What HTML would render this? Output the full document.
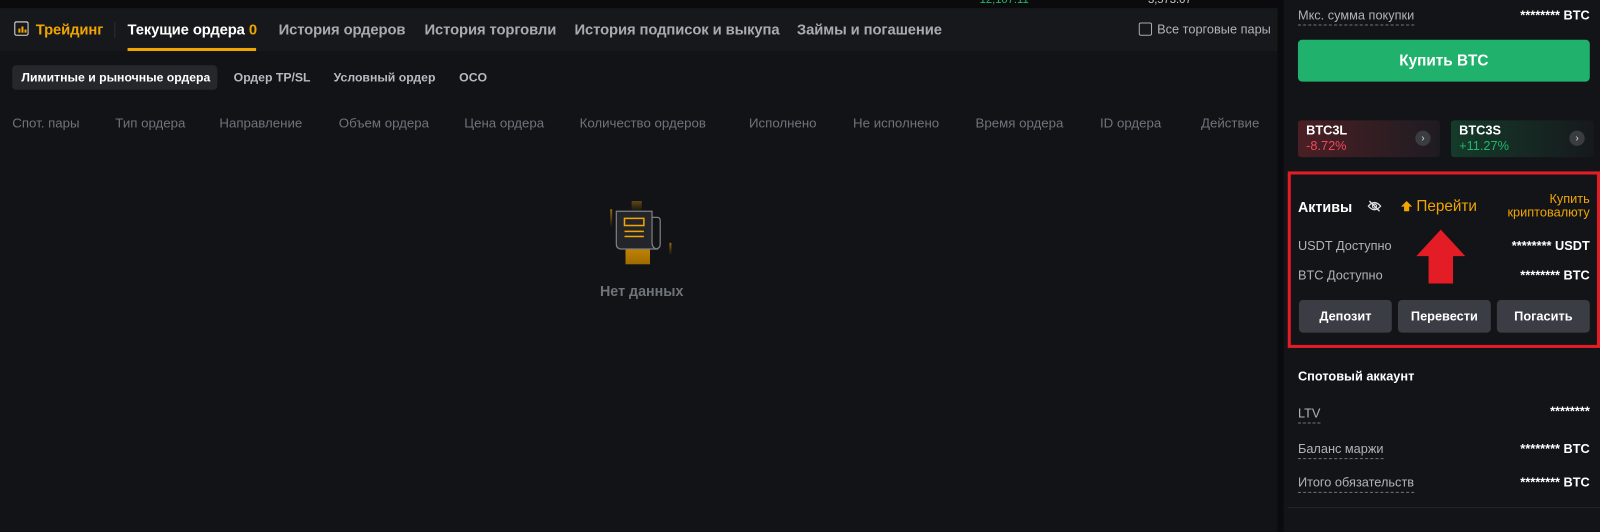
<!DOCTYPE html>
<html><head><meta charset="utf-8"><style>
*{margin:0;padding:0;box-sizing:border-box}
html,body{width:1600px;height:521px;overflow:hidden;background:#0b0b0e}
body{font-family:"Liberation Sans","DejaVu Sans",sans-serif;color:#eaecef}
#wrap{position:absolute;left:0;top:0;width:1568px;height:511px;transform:scale(1.0204);transform-origin:0 0}
.abs{position:absolute;white-space:nowrap}
#left{position:absolute;left:0;top:8px;width:1252px;height:513px;background:#121317}
#tabbar{position:absolute;left:0;top:0;width:1252px;height:42px;background:#17181c}
.tab{position:absolute;top:14px;font-size:14.5px;font-weight:bold;color:#a8abb2;letter-spacing:-0.1px}
.sub{position:absolute;top:61px;font-size:12px;font-weight:bold;color:#b7bac1}
.th{position:absolute;top:105px;font-size:13px;color:#6f737a}
#right{position:absolute;left:1258px;top:0;width:344px;height:521px;background:#131418}
.lbl{font-size:12.5px;color:#b0b3ba}
.val{font-size:12.5px;color:#fff;font-weight:bold;right:44px}
.btn{position:absolute;top:294px;width:91px;height:32px;background:#3a3d43;border-radius:4px;color:#fff;font-weight:bold;font-size:12.5px;text-align:center;line-height:32px}
.dash{border-bottom:1px dashed #6f737a;padding-bottom:2px}
</style></head><body><div id="wrap">
<div class="abs" style="left:960px;top:-6px;font-size:11px;color:#1fb76a">12,107.11</div>
<div class="abs" style="left:1125px;top:-6px;font-size:11px;color:#ccc">3,573.07</div>
<div id="left">
 <div id="tabbar">
  <div class="abs" style="left:14px;top:13px;width:14px;height:14px;border:1.5px solid #ddd;border-radius:2px"></div>
  <div class="abs" style="left:18px;top:20px;width:2px;height:4px;background:#f0a500"></div>
  <div class="abs" style="left:21px;top:18px;width:2px;height:6px;background:#f0a500"></div>
  <div class="abs" style="left:24px;top:21px;width:2px;height:3px;background:#f0a500"></div>
  <div class="tab" style="left:35px;color:#f0a500">Трейдинг</div>
  <div class="abs" style="left:112px;top:13px;width:1px;height:16px;background:#2a2c31"></div>
  <div class="tab" style="left:125px;color:#fff">Текущие ордера <span style="color:#f0a500">0</span></div>
  <div class="abs" style="left:125px;top:39px;width:126px;height:3px;background:#f0a500"></div>
  <div class="tab" style="left:273px">История ордеров</div>
  <div class="tab" style="left:416px">История торговли</div>
  <div class="tab" style="left:563px">История подписок и выкупа</div>
  <div class="tab" style="left:781px">Займы и погашение</div>
  <div class="abs" style="left:1116px;top:14px;width:13px;height:13px;border:1.5px solid #aaa;border-radius:2px"></div>
  <div class="abs" style="left:1134px;top:14px;font-size:12.5px;color:#b0b3ba">Все торговые пары</div>
 </div>
 <div class="abs" style="left:12px;top:56px;width:201px;height:24px;background:#25272c;border-radius:4px"></div>
 <div class="sub" style="left:21px;color:#fff">Лимитные и рыночные ордера</div>
 <div class="sub" style="left:229px">Ордер TP/SL</div>
 <div class="sub" style="left:327px">Условный ордер</div>
 <div class="sub" style="left:450px">OCO</div>
 <div class="th" style="left:12px">Спот. пары</div>
 <div class="th" style="left:113px">Тип ордера</div>
 <div class="th" style="left:215px">Направление</div>
 <div class="th" style="left:332px">Объем ордера</div>
 <div class="th" style="left:455px">Цена ордера</div>
 <div class="th" style="left:568px">Количество ордеров</div>
 <div class="th" style="left:734px">Исполнено</div>
 <div class="th" style="left:836px">Не исполнено</div>
 <div class="th" style="left:956px">Время ордера</div>
 <div class="th" style="left:1078px">ID ордера</div>
 <div class="th" style="left:1177px">Действие</div>
 <svg class="abs" style="left:595px;top:185px" width="66" height="70" viewBox="0 0 66 70">
  <defs><linearGradient id="g" x1="0" y1="0" x2="0" y2="1"><stop offset="0" stop-color="#f0a500" stop-opacity=".9"/><stop offset="1" stop-color="#a06a00"/></linearGradient>
  <linearGradient id="g2" x1="0" y1="0" x2="0" y2="1"><stop offset="0" stop-color="#f0a500" stop-opacity=".6"/><stop offset="1" stop-color="#f0a500" stop-opacity="0"/></linearGradient></defs>
  <rect x="18" y="37" width="24" height="29" fill="url(#g)"/>
  <rect x="3" y="12" width="2" height="18" fill="url(#g2)"/>
  <rect x="24" y="4" width="10" height="10" fill="url(#g2)" opacity=".6"/>
  <rect x="61" y="45" width="2" height="12" fill="url(#g2)"/>
  <path d="M9 14 H44 V44 Q44 51 50 51 H14 Q9 51 9 46 Z" fill="#23252a" stroke="#7d7f84" stroke-width="1.2"/>
  <path d="M44 20 H49 Q52 20 52 23 V46 Q52 51 47 51" fill="none" stroke="#7d7f84" stroke-width="1.2"/>
  <rect x="17" y="21" width="19" height="7" fill="none" stroke="#f0a500" stroke-width="1.5"/>
  <rect x="17" y="33" width="19" height="1.5" fill="#f0a500"/>
  <rect x="17" y="38" width="19" height="1.5" fill="#f0a500"/>
 </svg>
 <div class="abs" style="left:588px;top:269px;font-size:14px;font-weight:bold;color:#6f737a">Нет данных</div>
</div>
<div id="right">
 <div class="abs lbl" style="left:14px;top:8px"><span class="dash">Мкс. сумма покупки</span></div>
 <div class="abs val" style="top:8px">******** BTC</div>
 <div class="abs" style="left:14px;top:39px;width:286px;height:41px;background:#20b26c;border-radius:4px;color:#fff;font-weight:bold;font-size:15px;text-align:center;line-height:41px">Купить BTC</div>
 <div class="abs" style="left:14px;top:118px;width:139px;height:36px;border-radius:3px;background:linear-gradient(90deg,#4a1f24,#1e1c21)"></div>
 <div class="abs" style="left:22px;top:121px;font-size:12.5px;font-weight:bold;color:#fff">BTC3L</div>
 <div class="abs" style="left:22px;top:136px;font-size:12.5px;color:#f6465d">-8.72%</div>
 <div class="abs" style="left:129px;top:128px;width:15px;height:15px;border-radius:50%;background:#3a3c42;color:#ddd;font-size:10px;text-align:center;line-height:15px">›</div>
 <div class="abs" style="left:164px;top:118px;width:140px;height:36px;border-radius:3px;background:linear-gradient(90deg,#153a2a,#16191c)"></div>
 <div class="abs" style="left:172px;top:121px;font-size:12.5px;font-weight:bold;color:#fff">BTC3S</div>
 <div class="abs" style="left:172px;top:136px;font-size:12.5px;color:#1fb76a">+11.27%</div>
 <div class="abs" style="left:280px;top:128px;width:15px;height:15px;border-radius:50%;background:#3a3c42;color:#ddd;font-size:10px;text-align:center;line-height:15px">›</div>
 <div class="abs" style="left:4px;top:168px;width:306px;height:173px;border:3px solid #e31c25"></div>
 <div class="abs" style="left:14px;top:195px;font-size:14px;font-weight:bold;color:#fff">Активы</div>
 <svg class="abs" style="left:82px;top:196px" width="14" height="12" viewBox="0 0 14 12"><path d="M1 6 Q7 -1 13 6 Q7 13 1 6 Z" fill="none" stroke="#ddd" stroke-width="1.3"/><circle cx="7" cy="6" r="2" fill="none" stroke="#ddd" stroke-width="1.2"/><path d="M2 1 L12 11" stroke="#ddd" stroke-width="1.3"/></svg>
 <svg class="abs" style="left:115px;top:197px" width="11" height="11" viewBox="0 0 11 11"><path d="M5.5 0 L11 5.5 H8 V10 H3 V5.5 H0 Z" fill="#f0a500"/></svg>
 <div class="abs" style="left:130px;top:194px;font-size:15px;color:#f0a500">Перейти</div>
 <div class="abs" style="right:44px;top:189px;font-size:12.5px;color:#f0a500;text-align:right;line-height:13px">Купить<br>криптовалюту</div>
 <div class="abs lbl" style="left:14px;top:234px">USDT Доступно</div>
 <div class="abs val" style="top:234px">******** USDT</div>
 <div class="abs lbl" style="left:14px;top:263px">BTC Доступно</div>
 <div class="abs val" style="top:263px">******** BTC</div>
 <svg class="abs" style="left:130px;top:225px" width="48" height="53" viewBox="0 0 48 53"><path d="M24 0 L48 26 H36 V53 H12 V26 H0 Z" fill="#e31c25"/></svg>
 <div class="btn" style="left:15px">Депозит</div>
 <div class="btn" style="left:112px">Перевести</div>
 <div class="btn" style="left:209px">Погасить</div>
 <div class="abs" style="left:14px;top:362px;font-size:12.5px;font-weight:bold;color:#fff">Спотовый аккаунт</div>
 <div class="abs lbl" style="left:14px;top:398px"><span class="dash">LTV</span></div>
 <div class="abs val" style="top:396px">********</div>
 <div class="abs lbl" style="left:14px;top:433px"><span class="dash">Баланс маржи</span></div>
 <div class="abs val" style="top:433px">******** BTC</div>
 <div class="abs lbl" style="left:14px;top:466px"><span class="dash">Итого обязательств</span></div>
 <div class="abs val" style="top:466px">******** BTC</div>
 <div class="abs" style="left:4px;top:497px;width:340px;height:1px;background:#24262b"></div>
</div>
</div></body></html>
